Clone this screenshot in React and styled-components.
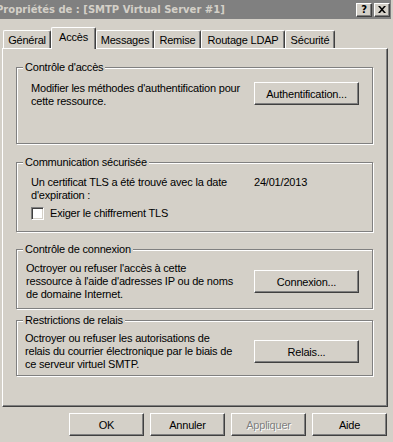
import React from 'react';
import styled, { createGlobalStyle, css } from 'styled-components';

const GlobalStyle = createGlobalStyle`
  html, body {
    margin: 0;
    padding: 0;
    background: #d4d0c8;
  }
  body {
    font-family: "Liberation Sans", Arial, sans-serif;
    font-size: 11px;
    letter-spacing: -0.2px;
    color: #000;
  }
  * {
    box-sizing: border-box;
  }
`;

const raised = css`
  border: 1px solid;
  border-color: #fff #404040 #404040 #fff;
  box-shadow: inset -1px -1px 0 #808080;
`;

const Window = styled.div`
  width: 393px;
  height: 442px;
  overflow: hidden;
  background: #d4d0c8;
  display: flex;
  flex-direction: column;
`;

const TitleBar = styled.div`
  height: 19px;
  margin-right: 2px;
  padding-right: 1px;
  background: #808080;
  display: flex;
  align-items: center;
  justify-content: space-between;
`;

const TitleText = styled.div`
  margin-left: -4px;
  font-family: "DejaVu Sans", Verdana, sans-serif;
  font-weight: bold;
  font-size: 10px;
  letter-spacing: 0;
  color: #d4d0c8;
  white-space: nowrap;
`;

const CaptionButtons = styled.div`
  display: flex;
  gap: 2px;
`;

const CaptionButton = styled.div`
  ${raised};
  width: 16px;
  height: 14px;
  background: #d4d0c8;
  display: flex;
  align-items: center;
  justify-content: center;
  font-family: "DejaVu Sans", sans-serif;
  font-weight: bold;
  font-size: 10px;
  line-height: 1;
  color: #000;
`;

const TabRow = styled.div`
  display: flex;
  align-items: flex-end;
  height: 21px;
  margin-top: 8px;
  padding-left: 3px;
`;

const Tab = styled.div`
  position: relative;
  width: ${(p) => p.$w}px;
  height: 18px;
  border-top: 1px solid #fff;
  border-left: 1px solid #fff;
  border-right: 1px solid #404040;
  box-shadow: inset -1px 0 0 #808080;
  border-radius: 2px 2px 0 0;
  background: #d4d0c8;
  display: flex;
  align-items: center;
  justify-content: center;
  white-space: nowrap;

  ${(p) =>
    p.$active &&
    css`
      z-index: 1;
      height: 22px;
      margin-bottom: -1px;
      padding-bottom: 3px;
    `}
`;

const Panel = styled.div`
  ${raised};
  margin-left: 2px;
  width: 386px;
  height: 359px;
  padding: 12px 0 0 13px;
  display: flex;
  flex-direction: column;
`;

const Group = styled.fieldset`
  margin: ${(p) => p.$mt || 0}px 0 0 0;
  padding: 0;
  width: 357px;
  height: ${(p) => p.$h}px;
  min-width: 0;
  border: 1px solid #808080;
  box-shadow: inset 1px 1px 0 #fff, 1px 1px 0 #fff;
`;

const Legend = styled.legend`
  margin-left: 6px;
  padding: 0 2px;
  line-height: 13px;
  background: #d4d0c8;
`;

const GroupBody = styled.div`
  display: flex;
  align-items: ${(p) => p.$align || 'flex-start'};
  padding: ${(p) => p.$pt}px 13px 0 ${(p) => p.$pl}px;
`;

const Text = styled.div`
  flex: 1;
  line-height: 13px;
  white-space: nowrap;
`;

const Side = styled.div`
  width: 105px;
  line-height: 13px;
  white-space: nowrap;
`;

const PushButton = styled.button`
  ${raised};
  width: ${(p) => p.$w || 75}px;
  height: 23px;
  padding: 0;
  margin: 0;
  background: #d4d0c8;
  font-family: inherit;
  font-size: 11px;
  letter-spacing: -0.2px;
  color: #000;
  border-radius: 0;

  &:disabled {
    color: #808080;
    text-shadow: 1px 1px 0 #fff;
  }
`;

const CheckRow = styled.label`
  display: flex;
  align-items: center;
  gap: 6px;
  margin-top: 5px;
  line-height: 13px;
`;

const CheckBox = styled.span`
  width: 13px;
  height: 13px;
  border: 1px solid;
  border-color: #808080 #fff #fff #808080;
  box-shadow: inset 1px 1px 0 #404040, inset -1px -1px 0 #d4d0c8;
  background: #fff;
`;

const Footer = styled.div`
  display: flex;
  justify-content: flex-end;
  gap: 6px;
  margin-top: 6px;
  padding-right: 6px;
`;

const tabs = [
  { label: 'Général', w: 48 },
  { label: 'Accès', w: 45, active: true },
  { label: 'Messages', w: 58 },
  { label: 'Remise', w: 47 },
  { label: 'Routage LDAP', w: 84 },
  { label: 'Sécurité', w: 50 },
];

const CloseIcon = () => (
  <svg width="8" height="7" viewBox="0 0 8 7">
    <path d="M0 0h2l2 2.2L6 0h2L5 3.5 8 7H6L4 4.8 2 7H0l3-3.5z" fill="#000" />
  </svg>
);

export default function App() {
  return (
    <>
      <GlobalStyle />
      <Window>
        <TitleBar>
          <TitleText>Propriétés de : [SMTP Virtual Server #1]</TitleText>
          <CaptionButtons>
            <CaptionButton>?</CaptionButton>
            <CaptionButton>
              <CloseIcon />
            </CaptionButton>
          </CaptionButtons>
        </TitleBar>

        <TabRow>
          {tabs.map((t) => (
            <Tab key={t.label} $w={t.w} $active={t.active}>
              {t.label}
            </Tab>
          ))}
        </TabRow>

        <Panel>
          <Group $h={83}>
            <Legend>Contrôle d'accès</Legend>
            <GroupBody $pt={8} $pl={14}>
              <Text>
                Modifier les méthodes d'authentification pour
                <br />
                cette ressource.
              </Text>
              <PushButton $w={105}>Authentification...</PushButton>
            </GroupBody>
          </Group>

          <Group $h={76} $mt={12}>
            <Legend>Communication sécurisée</Legend>
            <GroupBody $pt={7} $pl={14}>
              <Text>
                Un certificat TLS a été trouvé avec la date
                <br />
                d'expiration :
              </Text>
              <Side>24/01/2013</Side>
            </GroupBody>
            <GroupBody $pt={0} $pl={14}>
              <CheckRow>
                <CheckBox />
                Exiger le chiffrement TLS
              </CheckRow>
            </GroupBody>
          </Group>

          <Group $h={66} $mt={11}>
            <Legend>Contrôle de connexion</Legend>
            <GroupBody $pt={6} $pl={9} $align="center">
              <Text>
                Octroyer ou refuser l'accès à cette
                <br />
                ressource à l'aide d'adresses IP ou de noms
                <br />
                de domaine Internet.
              </Text>
              <PushButton $w={105}>Connexion...</PushButton>
            </GroupBody>
          </Group>

          <Group $h={62} $mt={5}>
            <Legend>Restrictions de relais</Legend>
            <GroupBody $pt={5} $pl={8} $align="center">
              <Text>
                Octroyer ou refuser les autorisations de
                <br />
                relais du courrier électronique par le biais de
                <br />
                ce serveur virtuel SMTP.
              </Text>
              <PushButton $w={105}>Relais...</PushButton>
            </GroupBody>
          </Group>
        </Panel>

        <Footer>
          <PushButton>OK</PushButton>
          <PushButton>Annuler</PushButton>
          <PushButton disabled>Appliquer</PushButton>
          <PushButton>Aide</PushButton>
        </Footer>
      </Window>
    </>
  );
}
